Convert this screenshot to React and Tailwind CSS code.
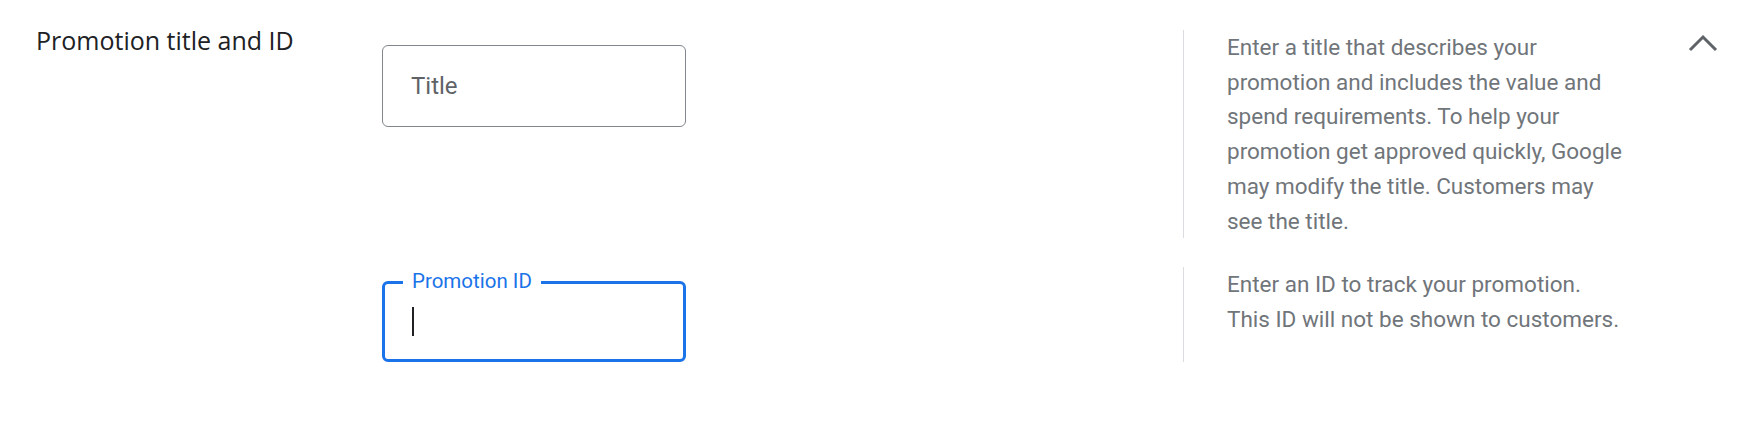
export default function App() {
  const roboto = { fontFamily: 'Roboto, "Liberation Sans", Arial, sans-serif' };
  const heading = { fontFamily: '"Open Sans", Roboto, Arial, sans-serif' };
  return (
    <div className="w-[1755px] h-[441px] bg-white flex overflow-hidden" style={roboto}>
      <div className="w-[382px] shrink-0 pl-[36px] pt-[26px]">
        <h2 className="text-[25px] leading-[28px] text-[#202124] font-normal" style={heading}>
          Promotion title and ID
        </h2>
      </div>

      <div className="flex flex-col pt-[30px] gap-[29px]">
        <div className="flex">
          <div className="w-[801px] shrink-0 pt-[15px]">
            <div className="w-[304px] h-[82px] border-[1.5px] border-[#80868b] rounded-[6px] flex items-center pl-[28px] text-[24px] text-[#5f6368]">
              Title
            </div>
          </div>
          <div className="border-l border-[#dadce0] pl-[43px] text-[22.5px] leading-[34.7px] text-[#70757a] whitespace-nowrap">
            <div>Enter a title that describes your</div>
            <div>promotion and includes the value and</div>
            <div>spend requirements. To help your</div>
            <div>promotion get approved quickly, Google</div>
            <div>may modify the title. Customers may</div>
            <div>see the title.</div>
          </div>
        </div>

        <div className="flex">
          <div className="w-[801px] shrink-0 pt-[14px]">
            <div className="relative w-[304px] h-[81px] border-[3px] border-[#1a73e8] rounded-[6px] flex items-center pl-[27px]">
              <span className="absolute left-[18px] top-[-16px] px-[9px] bg-white text-[20.5px] leading-[26px] text-[#1a73e8]">
                Promotion ID
              </span>
              <span className="block w-[2px] h-[29px] bg-[#202124]" />
            </div>
          </div>
          <div className="border-l border-[#dadce0] pl-[43px] text-[22.5px] leading-[34.7px] text-[#70757a] whitespace-nowrap">
            <div>Enter an ID to track your promotion.</div>
            <div>This ID will not be shown to customers.</div>
          </div>
        </div>
      </div>

      <div className="ml-auto mr-[37px] mt-[34px]">
        <svg width="30" height="18" viewBox="0 0 30 18" fill="none">
          <polyline points="2,16 15,3 28,16" stroke="#5f6368" strokeWidth="3" />
        </svg>
      </div>
    </div>
  );
}
